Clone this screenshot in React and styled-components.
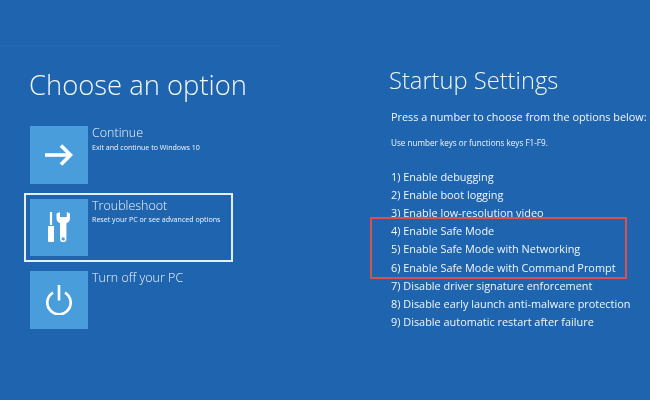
import styled, { createGlobalStyle } from "styled-components";

const Global = createGlobalStyle`
  html, body {
    margin: 0;
    padding: 0;
    background: #1e64ae;
  }
`;

const Screen = styled.div`
  width: 650px;
  height: 400px;
  overflow: hidden;
  display: flex;
  background: #1e64ae;
  color: #f2f7fc;
  font-family: "Open Sans", "Liberation Sans", sans-serif;
  filter: blur(0.35px);
`;

const LeftPane = styled.div`
  width: 280px;
  height: 400px;
  box-sizing: border-box;
  padding: 62px 0 0 30px;
  position: relative;
  &::before {
    content: "";
    position: absolute;
    left: 0;
    right: 0;
    top: 45px;
    height: 1px;
    background: #2669b2;
  }
`;

const RightPane = styled.div`
  flex: 1;
  padding: 62px 0 0 111px;
`;

const BigTitle = styled.h1`
  margin: 0 0 19px -1px;
  font-size: 27.4px;
  line-height: 45px;
  font-weight: 300;
  white-space: nowrap;
`;

const OptionList = styled.div`
  display: flex;
  flex-direction: column;
  gap: 15px;
`;

const Option = styled.div`
  display: flex;
  gap: 4.5px;
  width: 203px;
  height: 57.5px;
  position: relative;
  ${(p) =>
    p.$selected &&
    `
    &::after {
      content: "";
      position: absolute;
      left: -6px;
      top: -6px;
      width: 205px;
      height: 65px;
      border: 2px solid #e4eef7;
    }
  `}
`;

const Tile = styled.div`
  width: 57.5px;
  height: 57.5px;
  flex: none;
  background: #4a9ddb;
  display: flex;
  align-items: center;
  justify-content: center;
`;

const OptionText = styled.div`
  margin-top: -1px;
  white-space: nowrap;
`;

const OptionName = styled.div`
  font-size: 12.5px;
  line-height: 15px;
  font-weight: 300;
`;

const OptionDesc = styled.div`
  font-size: 7.1px;
  line-height: 11px;
  margin-top: 1.5px;
`;

const SettingsTitle = styled.h2`
  margin: 0 0 10px -2px;
  font-size: 23.7px;
  line-height: 37px;
  font-weight: 300;
  white-space: nowrap;
`;

const Prompt = styled.div`
  font-size: 10.85px;
  line-height: 16px;
  margin-bottom: 12px;
  white-space: nowrap;
`;

const Hint = styled.div`
  font-size: 8.15px;
  line-height: 11px;
  margin-bottom: 19.5px;
  white-space: nowrap;
`;

const Row = styled.div`
  font-size: 10.9px;
  line-height: 18.2px;
  white-space: nowrap;
`;

const Highlight = styled.div`
  position: relative;
  &::before {
    content: "";
    position: absolute;
    left: -21px;
    top: -5px;
    width: 253px;
    height: 58px;
    border: 2.5px solid #dc4f4f;
  }
`;

const ArrowIcon = () => (
  <svg width="28" height="22" viewBox="0 0 28 22" fill="none" stroke="#fff" strokeWidth="3.6">
    <path d="M0 11H25" />
    <path d="M16 1.5L25.5 11L16 20.5" />
  </svg>
);

const ToolsIcon = () => (
  <svg width="22" height="30" viewBox="0 0 22 30" fill="#fff">
    <rect x="1.9" y="0" width="2.2" height="13" />
    <path d="M0 14H6V29a1 1 0 0 1-1 1H1a1 1 0 0 1-1-1Z" />
    <path
      fillRule="evenodd"
      d="M8.5 1.5V6c0 2.8 1.6 4.6 3.5 5.2V27a3.2 3.2 0 0 0 6.4 0V11.2c2-.6 3.6-2.4 3.6-5.2V1.5L18.8 0V5H12V0ZM15.2 25.2a1.7 1.7 0 1 1 0 3.4a1.7 1.7 0 0 1 0-3.4Z"
    />
  </svg>
);

const PowerIcon = () => (
  <svg width="26" height="30" viewBox="0 0 26 30" fill="none" stroke="#fff" strokeWidth="2.6">
    <path d="M13 0V15.5" />
    <path d="M7 7.6a11.7 11.7 0 1 0 12 0" />
  </svg>
);

const options = [
  { name: "Continue", desc: "Exit and continue to Windows 10", icon: <ArrowIcon /> },
  { name: "Troubleshoot", desc: "Reset your PC or see advanced options", icon: <ToolsIcon />, selected: true },
  { name: "Turn off your PC", icon: <PowerIcon /> },
];

const before = ["1) Enable debugging", "2) Enable boot logging", "3) Enable low-resolution video"];
const safe = ["4) Enable Safe Mode", "5) Enable Safe Mode with Networking", "6) Enable Safe Mode with Command Prompt"];
const after = [
  "7) Disable driver signature enforcement",
  "8) Disable early launch anti-malware protection",
  "9) Disable automatic restart after failure",
];

const App = () => {
  return (
    <Screen>
      <Global />
      <LeftPane>
        <BigTitle>Choose an option</BigTitle>
        <OptionList>
          {options.map((o) => (
            <Option key={o.name} $selected={o.selected}>
              <Tile>{o.icon}</Tile>
              <OptionText>
                <OptionName>{o.name}</OptionName>
                {o.desc && <OptionDesc>{o.desc}</OptionDesc>}
              </OptionText>
            </Option>
          ))}
        </OptionList>
      </LeftPane>
      <RightPane>
        <SettingsTitle>Startup Settings</SettingsTitle>
        <Prompt>Press a number to choose from the options below:</Prompt>
        <Hint>Use number keys or functions keys F1-F9.</Hint>
        {before.map((t) => (
          <Row key={t}>{t}</Row>
        ))}
        <Highlight>
          {safe.map((t) => (
            <Row key={t}>{t}</Row>
          ))}
        </Highlight>
        {after.map((t) => (
          <Row key={t}>{t}</Row>
        ))}
      </RightPane>
    </Screen>
  );
};

export default App;
